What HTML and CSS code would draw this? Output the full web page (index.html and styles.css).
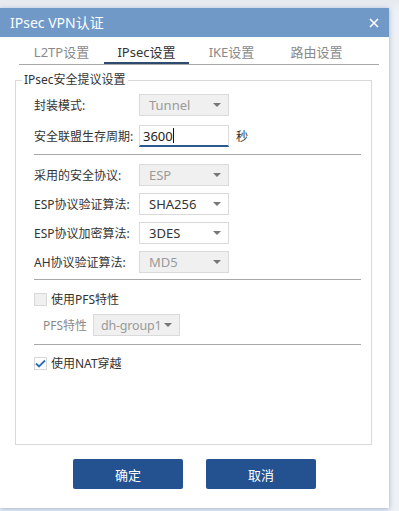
FILE: index.html
```html
<!DOCTYPE html>
<html lang="zh-CN">
<head>
<meta charset="utf-8">
<title>IPsec VPN认证</title>
<link rel="stylesheet" href="styles.css">
</head>
<body>
<div class="dialog">
  <div class="titlebar">
    <span class="title">IPsec VPN认证</span>
    <svg class="close" width="10" height="10" viewBox="0 0 10 10"><path d="M1 1L9 9M9 1L1 9" stroke="#fff" stroke-width="1.6" fill="none"/></svg>
  </div>
  <div class="tabs">
    <div class="tab">L2TP设置</div>
    <div class="tab active">IPsec设置</div>
    <div class="tab">IKE设置</div>
    <div class="tab">路由设置</div>
  </div>
  <fieldset class="group">
    <legend>IPsec安全提议设置</legend>
    <div class="row first">
      <span class="label">封装模式:</span>
      <div class="select disabled"><span>Tunnel</span><i class="arrow"></i></div>
    </div>
    <div class="row second">
      <span class="label">安全联盟生存周期:</span>
      <div class="input"><span>3600</span><i class="caret"></i></div>
      <span class="unit">秒</span>
    </div>
    <div class="divider d1"></div>
    <div class="row r3">
      <span class="label">采用的安全协议:</span>
      <div class="select disabled"><span>ESP</span><i class="arrow"></i></div>
    </div>
    <div class="row rn">
      <span class="label">ESP协议验证算法:</span>
      <div class="select"><span>SHA256</span><i class="arrow"></i></div>
    </div>
    <div class="row rn">
      <span class="label">ESP协议加密算法:</span>
      <div class="select"><span>3DES</span><i class="arrow"></i></div>
    </div>
    <div class="row rn">
      <span class="label">AH协议验证算法:</span>
      <div class="select disabled"><span>MD5</span><i class="arrow"></i></div>
    </div>
    <div class="divider d2"></div>
    <label class="check pfs"><i class="box disabled"></i><span>使用PFS特性</span></label>
    <div class="row pfsrow">
      <span class="sublabel">PFS特性</span>
      <div class="select disabled small"><span>dh-group1</span><i class="arrow"></i></div>
    </div>
    <div class="divider d3"></div>
    <label class="check nat"><i class="box checked"><svg width="11" height="9" viewBox="0 0 11 9"><path d="M1 4.5L4 7.5L10 1.5" stroke="#2a6fb8" stroke-width="1.8" fill="none"/></svg></i><span>使用NAT穿越</span></label>
  </fieldset>
  <div class="actions">
    <button class="btn">确定</button>
    <button class="btn">取消</button>
  </div>
</div>
</body>
</html>
```
FILE: styles.css
```css
html, body {
  margin: 0;
  padding: 0;
}
body {
  background: linear-gradient(#e6e9ee, #eef1f6 12px);
  width: 399px;
  height: 511px;
  overflow: hidden;
  font-family: "Noto Sans", "Noto Sans CJK SC", sans-serif;
  font-size: 12px;
  color: #333;
}
.dialog {
  margin-top: 8px;
  width: 389px;
  height: 500px;
  background: #fff;
  box-shadow: 0 1px 5px rgba(90, 120, 170, 0.55);
  display: flex;
  flex-direction: column;
}
.titlebar {
  height: 29px;
  background: #7099c8;
  display: flex;
  align-items: center;
  justify-content: space-between;
  padding: 0 10px 0 10px;
  color: #fff;
}
.title {
  font-size: 14px;
  line-height: 29px;
}
.close {
  display: block;
}
.tabs {
  display: flex;
  margin: 0 10px 0 19px;
  height: 27px;
  border-bottom: 1px solid #a8a8a8;
}
.tab {
  width: 85px;
  text-align: center;
  font-size: 13px;
  line-height: 30px;
  color: #8a8a8a;
}
.tab.active {
  color: #333;
  box-shadow: inset 0 -2px 0 #2d4b6e;
}
.group {
  margin: 7px 17px 0 15px;
  padding: 0 0 0 18px;
  border: 1px solid #d9d9d9;
  min-width: 0;
  height: 373px;
  box-sizing: border-box;
}
.group legend {
  font-size: 12px;
  padding: 0 2px;
  margin-left: -12px;
  color: #333;
  line-height: 16px;
}
.row {
  display: flex;
  align-items: center;
  height: 22px;
}
.row.first { margin-top: 6px; }
.row.second { margin-top: 9px; }
.row.r3 { margin-top: 9px; }
.row.rn { margin-top: 7px; }
.label {
  width: 105px;
  flex: none;
}
.select {
  position: relative;
  width: 90px;
  height: 22px;
  box-sizing: border-box;
  border: 1px solid #dadada;
  background: #fff;
  padding-left: 9px;
  display: flex;
  align-items: center;
  font-size: 13px;
  color: #333;
}
.select.disabled {
  background: #f0f0f0;
  color: #9a9a9a;
}
.select.small {
  width: 87px;
  padding-left: 7px;
  font-size: 12.5px;
  letter-spacing: -0.2px;
}
.arrow {
  position: absolute;
  right: 7px;
  top: 8px;
  width: 0;
  height: 0;
  border-left: 4px solid transparent;
  border-right: 4px solid transparent;
  border-top: 4px solid #777;
}
.input {
  width: 90px;
  height: 22px;
  box-sizing: border-box;
  border: 1px solid #dcdcdc;
  border-bottom: 2px solid #2a5a8e;
  display: flex;
  align-items: center;
  padding-left: 3px;
  font-size: 13px;
  color: #222;
}
.caret {
  width: 1px;
  height: 15px;
  background: #111;
}
.unit {
  margin-left: 7px;
}
.divider {
  height: 1px;
  background: #a8a8a8;
  margin-right: 10px;
}
.d1 { margin-top: 7px; }
.d2 { margin-top: 6px; }
.d3 { margin-top: 8px; }
.check {
  display: flex;
  align-items: center;
  height: 14px;
}
.check.pfs { margin-top: 12px; }
.check.nat { margin-top: 11px; }
.box {
  width: 13px;
  height: 13px;
  box-sizing: border-box;
  border: 1px solid #d8d8d8;
  margin-right: 4px;
  display: flex;
  align-items: center;
  justify-content: center;
}
.box.disabled {
  background: #f0f0f0;
}
.box.checked {
  background: #fff;
}
.pfsrow {
  margin-top: 8px;
  padding-left: 9px;
}
.sublabel {
  color: #8a8a8a;
  width: 50px;
  font-size: 12px;
}
.actions {
  display: flex;
  justify-content: center;
  gap: 23px;
  margin-top: 14px;
}
.btn {
  width: 110px;
  height: 30px;
  border: none;
  border-radius: 2px;
  background: #245190;
  color: #fff;
  font-family: "Noto Sans", "Noto Sans CJK SC", sans-serif;
  font-size: 13px;
  padding: 0;
}
```
